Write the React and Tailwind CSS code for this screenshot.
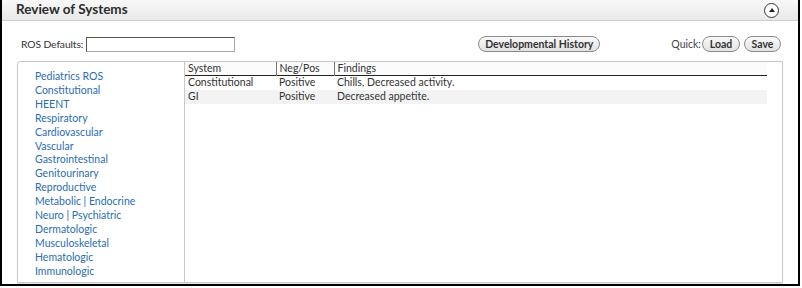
import React from 'react'

const systems = [
  'Pediatrics ROS',
  'Constitutional',
  'HEENT',
  'Respiratory',
  'Cardiovascular',
  'Vascular',
  'Gastrointestinal',
  'Genitourinary',
  'Reproductive',
  'Metabolic | Endocrine',
  'Neuro | Psychiatric',
  'Dermatologic',
  'Musculoskeletal',
  'Hematologic',
  'Immunologic'
]

const findings = [
  { system: 'Constitutional', result: 'Positive', text: 'Chills, Decreased activity.' },
  { system: 'GI', result: 'Positive', text: 'Decreased appetite.' }
]

function PillButton({ children, className = '' }) {
  return (
    <button
      className={`h-[16px] shrink-0 rounded-full border border-[#8a8a8a] bg-gradient-to-b from-[#fafafa] to-[#e2e2e2] text-[10.5px] font-bold leading-[14px] text-[#333] ${className}`}
    >
      {children}
    </button>
  )
}

export default function App() {
  return (
    <div className="w-[802px] h-[288px] bg-white font-['Lato',sans-serif] text-[#333]">
      <div className="w-[800px] h-[286px] border-l-2 border-r-2 border-b-2 border-black flex flex-col">
        {/* Header */}
        <div className="h-[21px] flex items-center justify-between border-b border-[#cfcfcf] bg-gradient-to-b from-[#f8f8f8] to-[#e9e9e9] pl-[14px] pr-[19px]">
          <h2 className="text-[13.5px] font-bold text-[#2b2b2b] leading-none">Review of Systems</h2>
          <div className="w-[15px] h-[15px] rounded-full border-[1.5px] border-[#333] bg-white flex items-center justify-center">
            <svg width="8" height="6" viewBox="0 0 8 6">
              <path d="M4 1 L7 5 L1 5 Z" fill="#222" />
            </svg>
          </div>
        </div>

        {/* Controls */}
        <div className="flex items-center pl-[19px] pr-[17px] pt-[15px] h-[31px] text-[10.5px]">
          <span className="shrink-0 whitespace-nowrap text-[10.3px] tracking-[-0.1px] leading-none">ROS Defaults:</span>
          <input className="ml-[3px] w-[149px] h-[15px] shrink-0 border border-[#aaa] border-l-[#555] border-t-[#555] bg-white" />
          <PillButton className="ml-[243px] w-[122px]">Developmental History</PillButton>
          <span className="ml-auto text-[#444] leading-none">Quick:</span>
          <PillButton className="ml-[1px] w-[38px]">Load</PillButton>
          <PillButton className="ml-[4px] w-[37px]">Save</PillButton>
        </div>

        {/* Main box */}
        <div className="mx-[15px] mt-[9px] mb-[1px] flex-1 flex border border-[#c8c8c8] rounded-tl-[3px] shadow-[0_1px_1px_rgba(0,0,0,0.12)]">
          <ul className="w-[167px] border-r border-[#c8c8c8] pl-[17px] pt-[8px] text-[10.5px] leading-[13.9px] text-[#2a6db0]">
            {systems.map((s) => (
              <li key={s}>{s}</li>
            ))}
          </ul>
          <div className="flex-1 pr-[15px]">
            <table className="w-full border-collapse text-[10.5px] leading-[13px]">
              <thead>
                <tr className="border-b border-[#222] bg-[#fbfbfb]">
                  <th className="w-[91px] pl-[3px] text-left font-normal">System</th>
                  <th className="w-[58px] pl-[3px] text-left font-normal border-l border-[#777]">Neg/Pos</th>
                  <th className="pl-[3px] text-left font-normal border-l border-[#777]">Findings</th>
                </tr>
              </thead>
              <tbody>
                {findings.map((f, i) => (
                  <tr key={f.system} className={i % 2 ? 'bg-[#f3f3f3]' : 'bg-white'}>
                    <td className="pl-[3px] h-[14px]">{f.system}</td>
                    <td className="pl-[3px]">{f.result}</td>
                    <td className="pl-[3px]">{f.text}</td>
                  </tr>
                ))}
              </tbody>
            </table>
          </div>
        </div>
      </div>
    </div>
  )
}
